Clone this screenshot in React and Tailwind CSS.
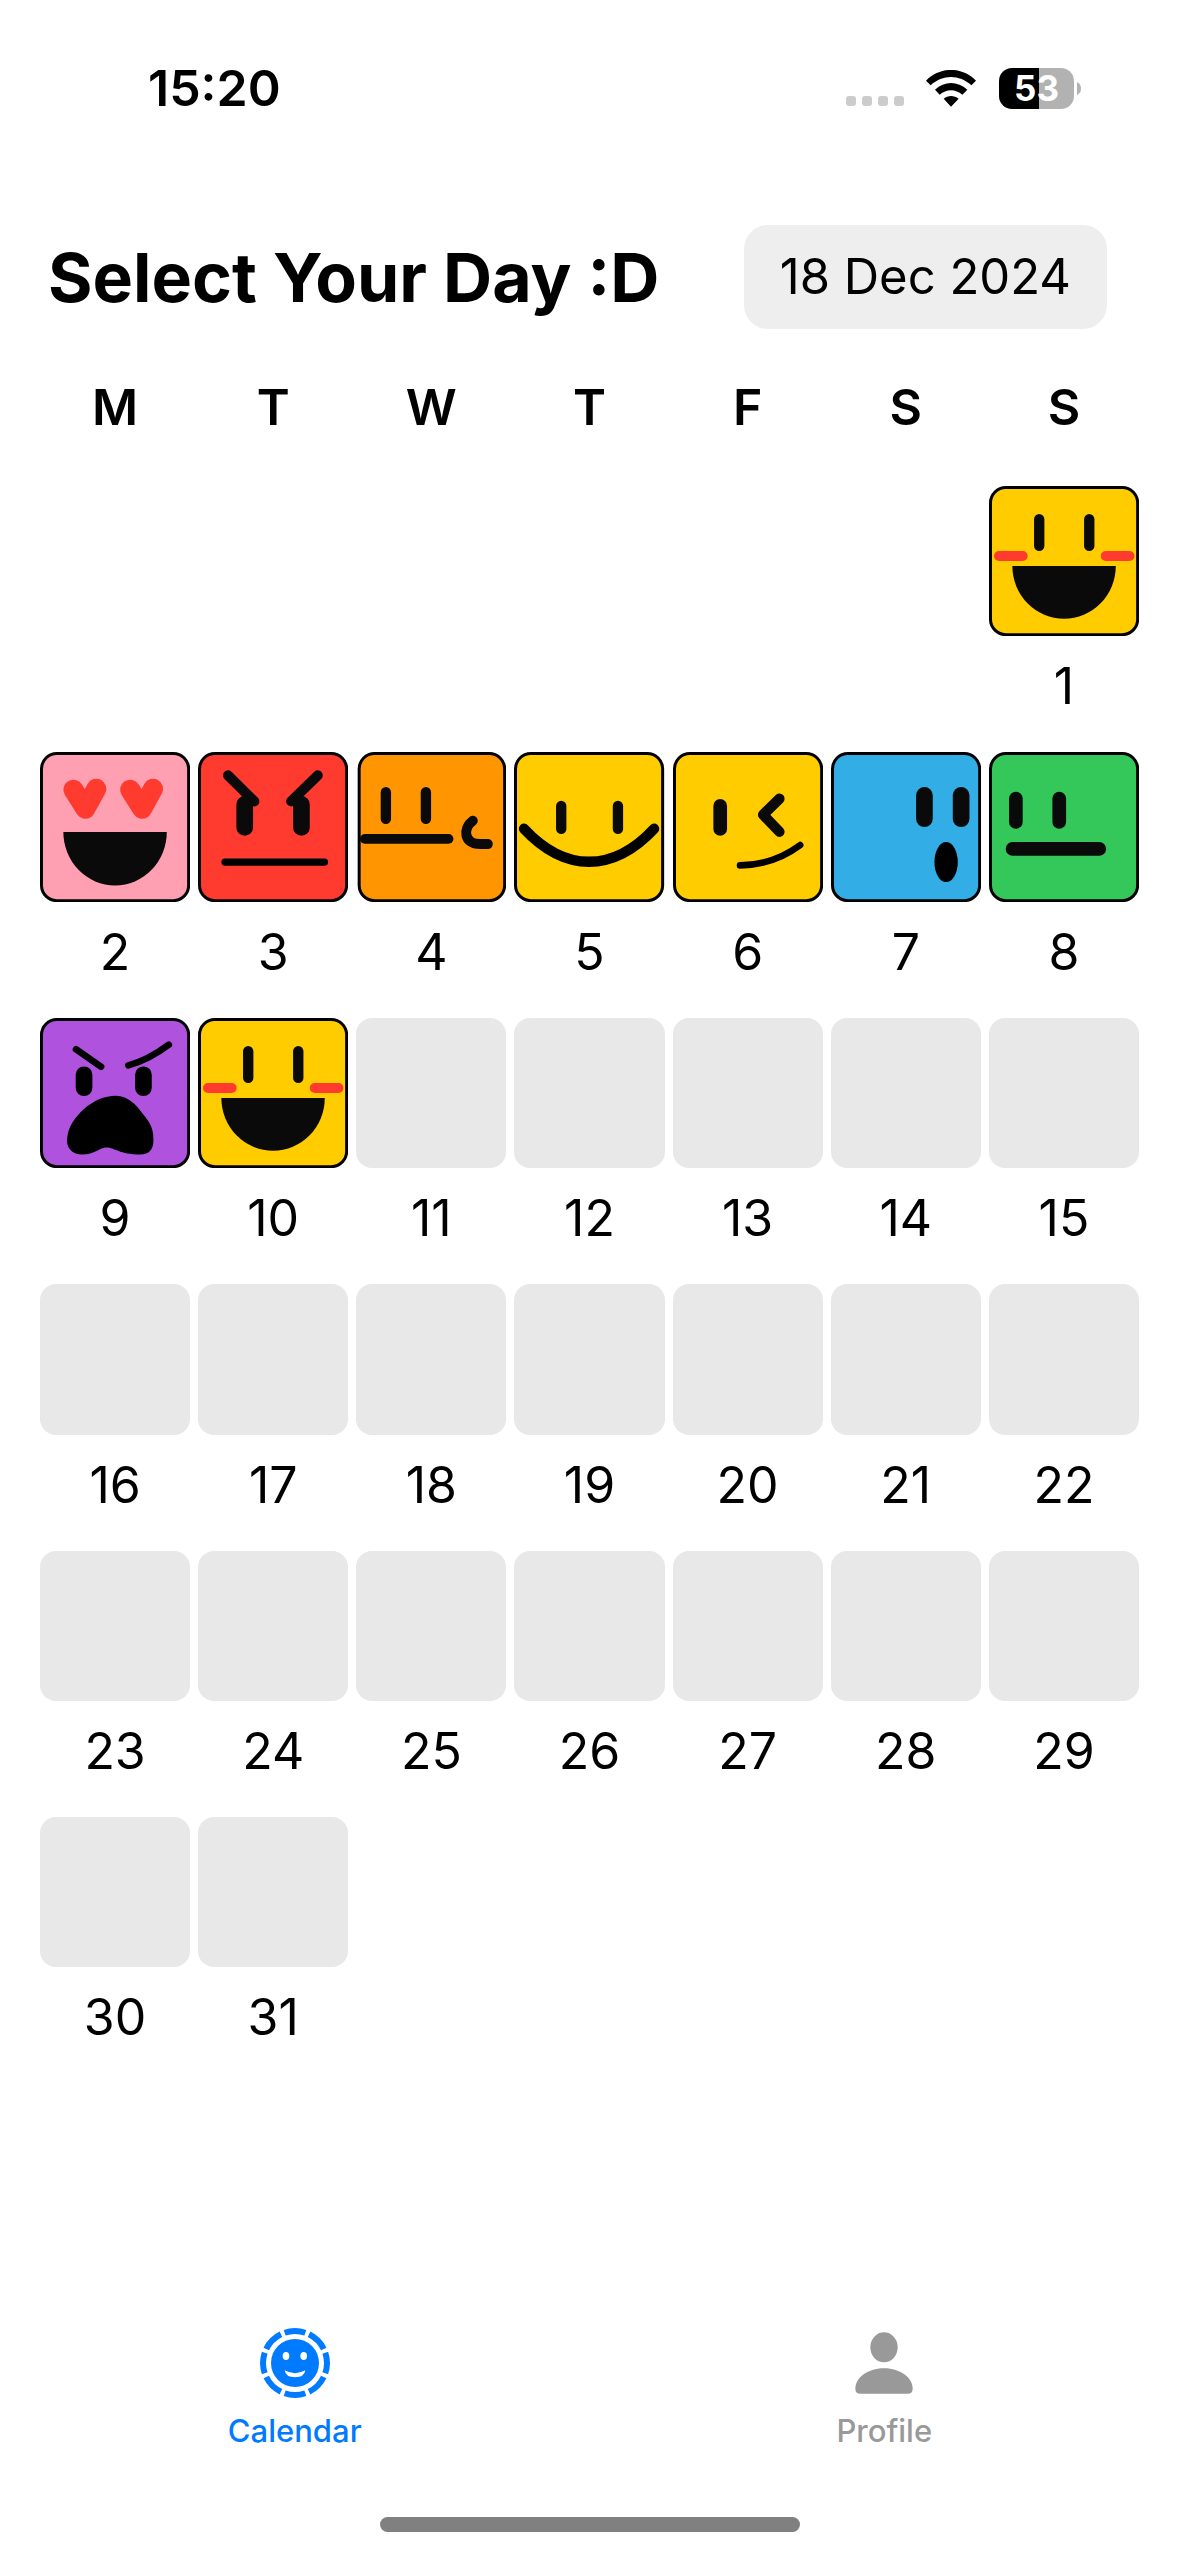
import React from "react";

const INK = "#0a0a0a";

function Pill({ x, y, w, h, fill = INK }) {
  return <rect x={x} y={y} width={w} height={h} rx={Math.min(w, h) / 2} fill={fill} />;
}

function Stroke({ d, width, color = INK }) {
  return (
    <path d={d} fill="none" stroke={color} strokeWidth={width} strokeLinecap="round" strokeLinejoin="round" />
  );
}

const MOODS = {
  happy: {
    label: "Happy",
    color: "#ffcc00",
    art: (
      <>
        <Pill x={135} y={84} w={31} h={111} />
        <Pill x={285} y={84} w={31} h={111} />
        <Pill x={15} y={195} w={101} h={30} fill="#ff3b30" />
        <Pill x={335} y={195} w={101} h={30} fill="#ff3b30" />
        <path d="M70 240H380A155 158 0 0 1 70 240Z" fill={INK} />
      </>
    ),
  },
  love: {
    label: "In love",
    color: "#ff9fb2",
    art: (
      <>
        <Stroke d="M100 113L136 170L169 110" width={60} color="#ff3b30" />
        <Stroke d="M270 113L306 170L339 110" width={60} color="#ff3b30" />
        <path d="M70 240H380A155 160 0 0 1 70 240Z" fill={INK} />
      </>
    ),
  },
  angry: {
    label: "Angry",
    color: "#ff3b30",
    art: (
      <>
        <Stroke d="M90 70L169 148" width={30} />
        <Stroke d="M359 70L279 148" width={30} />
        <Pill x={115} y={132} w={50} h={119} />
        <Pill x={285} y={132} w={50} h={119} />
        <Pill x={70} y={319} w={320} h={22} fill="#000" />
      </>
    ),
  },
  smirk: {
    label: "Unsure",
    color: "#ff9500",
    inset: 5,
    art: (
      <>
        <Pill x={74} y={105} w={31} h={111} />
        <Pill x={194} y={105} w={31} h={111} />
        <Pill x={12} y={246} w={280} h={29} />
        <Stroke d="M350 206C320 228 322 276 372 276H395" width={30} />
      </>
    ),
  },
  smile: {
    label: "Content",
    color: "#ffcc00",
    art: (
      <>
        <Pill x={126} y={146} w={31} h={100} />
        <Pill x={296} y={146} w={31} h={100} />
        <Stroke d="M30 230Q122 329 225 329T420 230" width={31} color="#000" />
      </>
    ),
  },
  wink: {
    label: "Playful",
    color: "#ffcc00",
    art: (
      <>
        <Pill x={121} y={141} w={41} h={110} />
        <Stroke d="M319 140L270 188L319 239" width={31} />
        <Stroke d="M201 340Q302 338 381 279" width={20} color="#000" />
      </>
    ),
  },
  surprised: {
    label: "Surprised",
    color: "#32ade6",
    art: (
      <>
        <Pill x={255} y={105} w={50} h={120} />
        <Pill x={365} y={105} w={50} h={120} />
        <ellipse cx={345} cy={330} rx={35} ry={60} fill="#000" />
      </>
    ),
  },
  neutral: {
    label: "Neutral",
    color: "#34c759",
    art: (
      <>
        <Pill x={60} y={119} w={41} h={111} />
        <Pill x={190} y={119} w={41} h={111} />
        <Pill x={50} y={270} w={301} h={41} />
      </>
    ),
  },
  furious: {
    label: "Furious",
    color: "#af52de",
    art: (
      <>
        <Stroke d="M108 94L183 146" width={20} color="#000" />
        <Stroke d="M265 142Q325 126 386 80" width={20} color="#000" />
        <Pill x={107} y={145} w={50} h={89} fill="#000" />
        <Pill x={285} y={145} w={50} h={89} fill="#000" />
        <path
          d="M228 233C262 233 287 258 308 287C330 314 340 330 340 365C340 395 328 409 300 409C240 409 222 388 200 388C178 388 165 409 126 409C98 409 81 392 81 368C81 325 108 296 130 274C160 248 192 233 228 233Z"
          fill="#000"
        />
      </>
    ),
  },
};

const ENTRIES = {
  1: "happy",
  2: "love",
  3: "angry",
  4: "smirk",
  5: "smile",
  6: "wink",
  7: "surprised",
  8: "neutral",
  9: "furious",
  10: "happy",
};

const WEEKDAYS = ["M", "T", "W", "T", "F", "S", "S"];
const DAYS = Array.from({ length: 31 }, (_, i) => i + 1);

function Face({ mood }) {
  const { color, art, inset = 0 } = MOODS[mood];
  return (
    <svg viewBox="0 0 450 450" className="block size-full" aria-hidden="true">
      <rect
        x={4.5 + inset}
        y={4.5}
        width={441 - inset}
        height={441}
        rx={46}
        fill={color}
        stroke="#000"
        strokeWidth={9}
      />
      {art}
    </svg>
  );
}

function Day({ day }) {
  const mood = ENTRIES[day];
  return (
    <button
      type="button"
      aria-label={mood ? `${day} December, ${MOODS[mood].label}` : `${day} December`}
      className={day === 1 ? "col-start-7 block" : "block"}
    >
      <span className={mood ? "block aspect-square" : "block aspect-square rounded-2xl bg-[#e8e8e8]"}>
        {mood && <Face mood={mood} />}
      </span>
      <span className="mt-5 block text-[50px] leading-[60px]">{day}</span>
    </button>
  );
}

function StatusBar() {
  return (
    <div className="flex h-44 items-center justify-between pr-[98px] pl-[148px]">
      <span className="text-[50px] leading-[60px] font-semibold">15:20</span>
      <div className="flex items-center">
        <div className="mt-[26px] mr-[22px] flex gap-1.5">
          <span className="size-2.5 rounded-[3px] bg-[#cccccc]" />
          <span className="size-2.5 rounded-[3px] bg-[#cccccc]" />
          <span className="size-2.5 rounded-[3px] bg-[#cccccc]" />
          <span className="size-2.5 rounded-[3px] bg-[#cccccc]" />
        </div>
        <svg viewBox="0 0 150 111" className="mr-[23px] h-[37px] w-[50px]" role="img" aria-label="Wi-Fi">
          <path d="M0 32C42 -11 108 -11 150 32L136 46C100 13 50 13 14 46Z" />
          <path d="M27 59C55 32 95 32 124 59L109 74C89 56 61 56 41 74Z" />
          <path d="M53 86C66 75 84 75 98 86L75 110Z" />
        </svg>
        <div className="flex items-center gap-[3px]">
          <div className="flex h-[41px] w-[75px] items-center justify-center rounded-[13px] bg-linear-to-r from-black from-[53%] to-[#b2b2b2] to-[53%] text-[35px] leading-[41px] font-bold text-white">
            53
          </div>
          <svg viewBox="0 0 4 13" className="h-[13px] w-1" aria-hidden="true">
            <path d="M0 0Q4 2 4 6.500T0 13Z" fill="#b2b2b2" />
          </svg>
        </div>
      </div>
    </div>
  );
}

function CalendarIcon() {
  return (
    <svg viewBox="0 0 210 210" className="size-[70px]" aria-hidden="true">
      <circle
        cx={105}
        cy={105}
        r={96}
        fill="none"
        stroke="currentColor"
        strokeWidth={18}
        pathLength={80}
        strokeDasharray="8.400 1.600"
        strokeDashoffset={4.2}
      />
      <circle cx={105} cy={105} r={72} fill="currentColor" />
      <ellipse cx={78} cy={84} rx={10} ry={12} fill="#fff" />
      <ellipse cx={131} cy={84} rx={10} ry={12} fill="#fff" />
      <path d="M74 127Q105 144 136 127Q133 148 105 148T74 127Z" fill="#fff" />
    </svg>
  );
}

function ProfileIcon() {
  return (
    <svg viewBox="0 0 210 210" className="size-[70px]" aria-hidden="true" fill="currentColor">
      <ellipse cx={105} cy={58} rx={41} ry={45} />
      <path d="M105 121C156 121 191 151 191 182Q191 197 176 197H34Q19 197 19 182C19 151 54 121 105 121Z" />
    </svg>
  );
}

export default function App() {
  return (
    <div className="flex min-h-screen flex-col bg-white font-['Inter',sans-serif] text-black">
      <StatusBar />
      <main>
        <header className="flex items-center justify-between pt-[49px] pr-18 pl-12">
          <h1 className="text-[68px] leading-[84px] font-bold whitespace-nowrap">Select Your Day :D</h1>
          <button
            type="button"
            className="h-26 rounded-3xl bg-[#eeeeee] px-9 text-[49px] leading-[60px] whitespace-nowrap"
          >
            18 Dec 2024
          </button>
        </header>
        <div className="mt-12 grid grid-cols-7 gap-x-2 px-10 text-center text-[50px] leading-[60px] font-semibold">
          {WEEKDAYS.map((name, i) => (
            <span key={i}>{name}</span>
          ))}
        </div>
        <div className="mt-[49px] grid grid-cols-7 gap-x-2 gap-y-9 px-10 text-center">
          {DAYS.map((day) => (
            <Day key={day} day={day} />
          ))}
        </div>
      </main>
      <nav className="mt-auto flex text-[31px] leading-9 font-medium">
        <button type="button" aria-current="page" className="flex flex-1 flex-col items-center gap-[15px] text-[#007aff]">
          <CalendarIcon />
          Calendar
        </button>
        <button type="button" className="flex flex-1 flex-col items-center gap-[15px] text-[#999999]">
          <ProfileIcon />
          Profile
        </button>
      </nav>
      <div className="mx-auto mt-17 mb-6 h-[15px] w-[420px] rounded-full bg-[#808080]" />
    </div>
  );
}
